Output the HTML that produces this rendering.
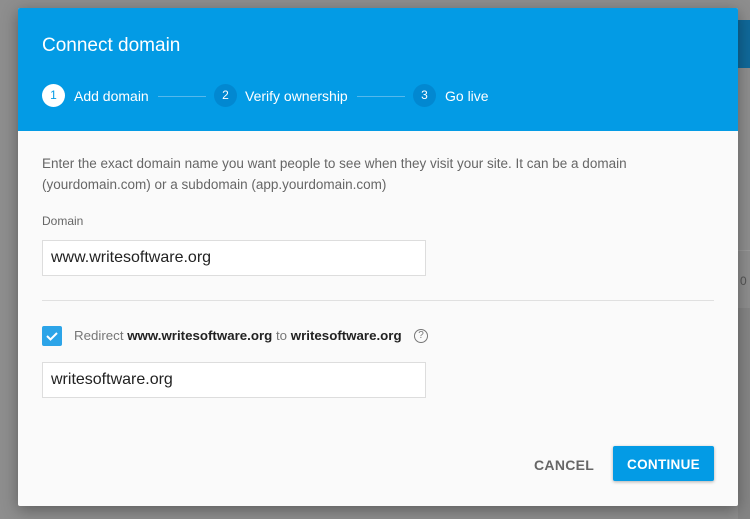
<!DOCTYPE html>
<html><head><style>
body{margin:0;width:750px;height:519px;background:#8e8e8e;position:relative;overflow:hidden;font-family:"Liberation Sans",sans-serif}
.a{position:absolute}
.dlg{left:18px;top:8px;width:720px;height:498px;background:#fafafa;box-shadow:0 4px 16px rgba(0,0,0,.35);border-radius:2px;overflow:hidden}
.hd{left:0;top:0;width:720px;height:123px;background:#039be5}
.c{width:23px;height:23px;border-radius:50%;font-size:12px;line-height:23px;text-align:center;top:76px}
.st{top:80px;font-size:14px;color:#fff}
.ln{top:88px;height:1px;width:48px;background:#55b8ec}
.in{width:384px;height:36px;border:1px solid #ddd;background:#fff;font-size:16px;color:#222;line-height:34px;padding-left:8px;box-sizing:border-box}
</style></head><body>
<div class="a" style="left:738px;top:20px;width:12px;height:48px;background:#10699a"></div>
<div class="a" style="left:738px;top:250px;width:12px;height:1px;background:#9a9a9a"></div>
<div class="a" style="left:740px;top:274px;font-size:12px;color:#555">0</div>
<div class="a" style="left:738px;top:308px;width:12px;height:211px;background:#858585"></div>
<div class="a dlg">
 <div class="a hd">
  <div class="a" style="left:24px;top:27px;font-size:19px;color:#fff">Connect domain</div>
  <div class="a c" style="left:24px;background:#fff;color:#039be5">1</div>
  <div class="a st" style="left:56px">Add domain</div>
  <div class="a ln" style="left:140px"></div>
  <div class="a c" style="left:196px;background:#0288d1;color:#fff">2</div>
  <div class="a st" style="left:227px">Verify ownership</div>
  <div class="a ln" style="left:339px"></div>
  <div class="a c" style="left:395px;background:#0288d1;color:#fff">3</div>
  <div class="a st" style="left:427px">Go live</div>
 </div>
 <div class="a" style="left:24px;top:145px;width:680px;font-size:13.5px;line-height:21px;color:#666">Enter the exact domain name you want people to see when they visit your site. It can be a domain (yourdomain.com) or a subdomain (app.yourdomain.com)</div>
 <div class="a" style="left:24px;top:206px;font-size:12px;color:#666">Domain</div>
 <div class="a in" style="left:24px;top:232px">www.writesoftware.org</div>
 <div class="a" style="left:24px;top:292px;width:672px;height:1px;background:#e0e0e0"></div>
 <div class="a" style="left:24px;top:318px;width:20px;height:20px;background:#2ca4e8;border-radius:2px"><svg width="20" height="20"><path d="M5 10l3.5 3.5L15 7" stroke="#fff" stroke-width="2" fill="none"/></svg></div>
 <div class="a" style="left:56px;top:320px;font-size:13.3px;color:#777">Redirect <b style="color:#222">www.writesoftware.org</b> to <b style="color:#222">writesoftware.org</b></div>
 <div class="a" style="left:396px;top:321px;width:12px;height:12px;border:1.3px solid #777;border-radius:50%;font-size:10px;line-height:12px;text-align:center;color:#777">?</div>
 <div class="a in" style="left:24px;top:354px">writesoftware.org</div>
 <div class="a" style="left:516px;top:449px;font-size:14px;color:#666;font-weight:bold;letter-spacing:.3px">CANCEL</div>
 <div class="a" style="left:595px;top:438px;width:101px;height:35px;background:#039be5;border-radius:2px;box-shadow:0 1px 3px rgba(0,0,0,.3);color:#fff;font-size:13.5px;font-weight:bold;text-align:center;line-height:37px;letter-spacing:.3px">CONTINUE</div>
</div>
</body></html>
